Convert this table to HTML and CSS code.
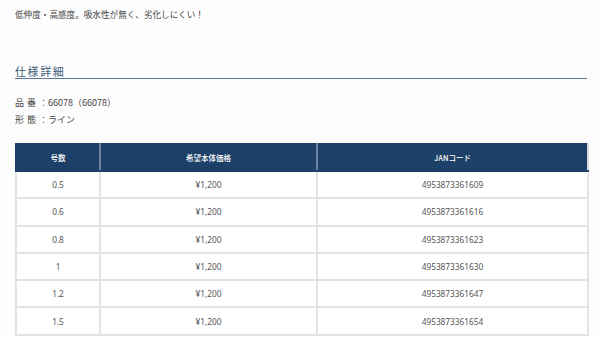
FILE: index.html
```html
<!DOCTYPE html>
<html lang="ja">
<head>
<meta charset="utf-8">
<link rel="stylesheet" href="styles.css">
</head>
<body>
<div class="wrap">
  <p class="lead">低伸度・高感度。吸水性が無く、劣化しにくい！</p>
  <h2 class="heading">仕様詳細</h2>
  <div class="specs">
    <p class="spec"><span class="lbl">品番</span>：66078（66078）</p>
    <p class="spec"><span class="lbl">形態</span>：ライン</p>
  </div>
  <table class="tbl">
    <colgroup>
      <col class="c1"><col class="c2"><col class="c3">
    </colgroup>
    <thead>
      <tr><th>号数</th><th>希望本体価格</th><th>JANコード</th></tr>
    </thead>
    <tbody>
      <tr><td>0.5</td><td>¥1,200</td><td>4953873361609</td></tr>
      <tr><td>0.6</td><td>¥1,200</td><td>4953873361616</td></tr>
      <tr><td>0.8</td><td>¥1,200</td><td>4953873361623</td></tr>
      <tr><td>1</td><td>¥1,200</td><td>4953873361630</td></tr>
      <tr><td>1.2</td><td>¥1,200</td><td>4953873361647</td></tr>
      <tr><td>1.5</td><td>¥1,200</td><td>4953873361654</td></tr>
    </tbody>
  </table>
</div>
</body>
</html>
```
FILE: styles.css
```css
html, body {
  margin: 0;
  padding: 0;
  background: #fdfdfd;
}
body {
  font-family: "Noto Sans CJK JP", "Noto Sans", sans-serif;
  color: #444;
}
.wrap {
  padding: 6px 13px 0 15px;
}
.lead {
  margin: 0;
  font-size: 8.6px;
  line-height: 16px;
  color: #444;
}
.heading {
  margin: 43px 0 0;
  font-size: 11px;
  line-height: 13px;
  font-weight: normal;
  letter-spacing: 1.6px;
  color: #3d5b7a;
  border-bottom: 1px solid #5d7894;
}
.specs {
  margin-top: 15px;
}
.spec {
  margin: 0;
  font-size: 9px;
  line-height: 17px;
  color: #444;
}
.lbl {
  letter-spacing: 3px;
}
.tbl {
  margin-top: 15px;
  width: 572px;
  border-collapse: collapse;
  table-layout: fixed;
  font-family: "Noto Sans", "Noto Sans CJK JP", sans-serif;
}
.c1 { width: 84px; }
.c2 { width: 217px; }
.c3 { width: 271px; }
.tbl th {
  height: 25px;
  padding: 0;
  background: #1d4068;
  color: #fff;
  font-family: "Noto Sans CJK JP", sans-serif;
  font-size: 7.5px;
  font-weight: 500;
  border: 2px solid #1d4068;
  border-right-color: #6b84a2;
}
.tbl th:last-child {
  border-right-color: #d6dde6;
}
.tbl td {
  height: 25.3px;
  padding: 0;
  text-align: center;
  font-size: 8.3px;
  color: #555;
  border: 2px solid #e3e3e3;
  background: #fff;
}
```
